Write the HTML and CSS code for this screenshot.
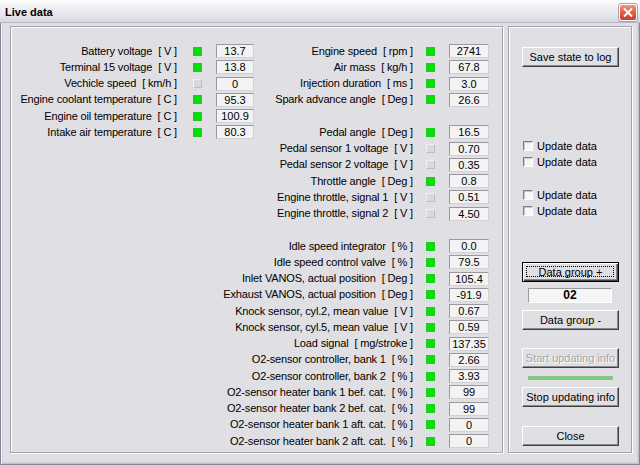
FILE: index.html
```html
<!DOCTYPE html>
<html>
<head>
<meta charset="utf-8">
<title>Live data</title>
<link rel="stylesheet" href="styles.css">
</head>
<body>
<div class="window">
  <div class="titlebar">
    <span class="title">Live data</span>
    <span class="close-x"><svg width="10" height="9" viewBox="0 0 10 9"><path d="M1 0.5 L9 8.5 M9 0.5 L1 8.5" stroke="#fff" stroke-width="2" fill="none"/></svg></span>
  </div>
  <div class="client">
    <div class="group data">
      <div class="top">
        <div class="col col1">
          <div class="row"><span class="lbl">Battery voltage <span class="u">[ V ]</span></span><i class="led on"></i><span class="val">13.7</span></div>
          <div class="row"><span class="lbl">Terminal 15 voltage <span class="u">[ V ]</span></span><i class="led on"></i><span class="val">13.8</span></div>
          <div class="row"><span class="lbl">Vechicle speed <span class="u">[ km/h ]</span></span><i class="led"></i><span class="val">0</span></div>
          <div class="row"><span class="lbl">Engine coolant temperature <span class="u">[ C ]</span></span><i class="led on"></i><span class="val">95.3</span></div>
          <div class="row"><span class="lbl">Engine oil temperature <span class="u">[ C ]</span></span><i class="led on"></i><span class="val">100.9</span></div>
          <div class="row"><span class="lbl">Intake air temperature <span class="u">[ C ]</span></span><i class="led on"></i><span class="val">80.3</span></div>
        </div>
        <div class="col col2">
          <div class="row"><span class="lbl">Engine speed <span class="u">[ rpm ]</span></span><i class="led on"></i><span class="val">2741</span></div>
          <div class="row"><span class="lbl">Air mass <span class="u">[ kg/h ]</span></span><i class="led on"></i><span class="val">67.8</span></div>
          <div class="row"><span class="lbl">Injection duration <span class="u">[ ms ]</span></span><i class="led on"></i><span class="val">3.0</span></div>
          <div class="row"><span class="lbl">Spark advance angle <span class="u">[ Deg ]</span></span><i class="led on"></i><span class="val">26.6</span></div>
          <div class="row gap-before"><span class="lbl">Pedal angle <span class="u">[ Deg ]</span></span><i class="led on"></i><span class="val">16.5</span></div>
          <div class="row"><span class="lbl">Pedal sensor 1 voltage <span class="u">[ V ]</span></span><i class="led"></i><span class="val">0.70</span></div>
          <div class="row"><span class="lbl">Pedal sensor 2 voltage <span class="u">[ V ]</span></span><i class="led"></i><span class="val">0.35</span></div>
          <div class="row"><span class="lbl">Throttle angle <span class="u">[ Deg ]</span></span><i class="led on"></i><span class="val">0.8</span></div>
          <div class="row"><span class="lbl">Engine throttle, signal 1 <span class="u">[ V ]</span></span><i class="led"></i><span class="val">0.51</span></div>
          <div class="row"><span class="lbl">Engine throttle, signal 2 <span class="u">[ V ]</span></span><i class="led"></i><span class="val">4.50</span></div>
        </div>
      </div>
      <div class="bottom">
        <div class="row"><span class="lbl">Idle speed integrator <span class="u">[ % ]</span></span><i class="led on"></i><span class="val">0.0</span></div>
        <div class="row"><span class="lbl">Idle speed control valve <span class="u">[ % ]</span></span><i class="led on"></i><span class="val">79.5</span></div>
        <div class="row"><span class="lbl">Inlet VANOS, actual position <span class="u">[ Deg ]</span></span><i class="led on"></i><span class="val">105.4</span></div>
        <div class="row"><span class="lbl">Exhaust VANOS, actual position <span class="u">[ Deg ]</span></span><i class="led on"></i><span class="val">-91.9</span></div>
        <div class="row"><span class="lbl">Knock sensor, cyl.2, mean value <span class="u">[ V ]</span></span><i class="led on"></i><span class="val">0.67</span></div>
        <div class="row"><span class="lbl">Knock sensor, cyl.5, mean value <span class="u">[ V ]</span></span><i class="led on"></i><span class="val">0.59</span></div>
        <div class="row"><span class="lbl">Load signal <span class="u">[ mg/stroke ]</span></span><i class="led on"></i><span class="val">137.35</span></div>
        <div class="row"><span class="lbl">O2-sensor controller, bank 1 <span class="u">[ % ]</span></span><i class="led on"></i><span class="val">2.66</span></div>
        <div class="row"><span class="lbl">O2-sensor controller, bank 2 <span class="u">[ % ]</span></span><i class="led on"></i><span class="val">3.93</span></div>
        <div class="row"><span class="lbl">O2-sensor heater bank 1 bef. cat. <span class="u">[ % ]</span></span><i class="led on"></i><span class="val">99</span></div>
        <div class="row"><span class="lbl">O2-sensor heater bank 2 bef. cat. <span class="u">[ % ]</span></span><i class="led on"></i><span class="val">99</span></div>
        <div class="row"><span class="lbl">O2-sensor heater bank 1 aft. cat. <span class="u">[ % ]</span></span><i class="led on"></i><span class="val">0</span></div>
        <div class="row"><span class="lbl">O2-sensor heater bank 2 aft. cat. <span class="u">[ % ]</span></span><i class="led on"></i><span class="val">0</span></div>
      </div>
    </div>
    <div class="group side">
      <div class="btn btn-save">Save state to log</div>
      <div class="chk chk-first"><i class="box"></i>Update data</div>
      <div class="chk"><i class="box"></i>Update data</div>
      <div class="chk chk-third"><i class="box"></i>Update data</div>
      <div class="chk"><i class="box"></i>Update data</div>
      <div class="btn btn-default btn-plus">Data group +</div>
      <div class="group-no">02</div>
      <div class="btn btn-minus">Data group -</div>
      <div class="btn btn-disabled btn-start">Start updating info</div>
      <div class="progress"></div>
      <div class="btn btn-stop">Stop updating info</div>
      <div class="btn btn-close">Close</div>
    </div>
  </div>
</div>
</body>
</html>
```

FILE: styles.css
```css
* { box-sizing: border-box; }
html, body { margin: 0; padding: 0; }
body {
  width: 640px;
  height: 465px;
  overflow: hidden;
  font-family: "Liberation Sans", Arial, sans-serif;
  font-size: 11px;
  color: #000;
  background: #e0dfe3;
}
.window {
  width: 640px;
  height: 465px;
  display: flex;
  flex-direction: column;
  background: #e0dfe3;
  border-left: 1px solid #85859a;
  border-right: 1px solid #85859a;
  border-bottom: 1px solid #85859a;
  box-shadow: inset 1px 0 #f4f4f8, inset -1px 0 #c4c4d0, inset 0 -1px #c4c4d0, inset 2px 0 #d0d0da, inset -2px 0 #d0d0da, inset 0 -2px #d0d0da;
}
.titlebar {
  height: 23px;
  flex: none;
  display: flex;
  align-items: center;
  justify-content: space-between;
  padding: 0 3px 0 5px;
  margin: 0 -1px;
  background: linear-gradient(to bottom, #fdfdfe 0%, #f0f0f4 35%, #e2e2ea 75%, #d6d6e0 100%);
  border-bottom: 1px solid #b8b8c6;
}
.title {
  font-weight: bold;
  font-size: 11px;
  padding-top: 1px;
}
.close-x {
  width: 18px;
  height: 17px;
  margin-top: 2px;
  display: flex;
  align-items: center;
  justify-content: center;
  border: 1px solid #fff;
  border-radius: 3px;
  background: linear-gradient(to bottom, #f09a80 0%, #e06048 45%, #c8402c 100%);
  box-shadow: 0 0 0 1px #b0a0a8;
}
.client {
  flex: 1;
  display: flex;
  padding: 3px 7px 11px 9px;
  gap: 5px;
}
.group {
  border: 1px solid #a2a2aa;
  box-shadow: inset 1px 1px 0 #fff, 1px 1px 0 #fff;
}
.data {
  width: 493px;
  padding: 16px 13px 0 0;
}
.top {
  display: flex;
  align-items: flex-start;
}
.col1 { width: 243px; }
.col2 { flex: 1; }
.row {
  height: 16.25px;
  display: flex;
  align-items: center;
}
.row.gap-before { margin-top: 16.25px; }
.bottom { margin-top: 16.25px; }
.lbl {
  flex: 1;
  text-align: right;
  white-space: nowrap;
  padding-bottom: 1px;
  letter-spacing: -0.15px;
}
.u { margin-left: 3px; }
.led {
  width: 9px;
  height: 9px;
  margin-left: 13px;
  background: #dadada;
  border: 1px solid;
  border-color: #f2f2f2 #bdbdbd #bdbdbd #f2f2f2;
}
.col1 .led { margin-left: 16px; }
.led.on {
  background: #0cdc0c;
  border-color: #18d018;
}
.val {
  width: 40px;
  height: 14px;
  margin-left: 14px;
  text-align: center;
  line-height: 12px;
  background: #f3f3f4;
  border: 1px solid;
  border-color: #9a9a9e #d2d2d6 #d2d2d6 #9a9a9e;
}
.col1 .val { width: 38px; }

.side {
  width: 124px;
  display: flex;
  flex-direction: column;
  align-items: flex-start;
  padding-left: 13px;
}
.btn {
  width: 97px;
  height: 20px;
  display: flex;
  align-items: center;
  justify-content: center;
  background: #e0dfe3;
  border: 1px solid;
  border-color: #ffffff #404040 #404040 #ffffff;
  box-shadow: inset -1px -1px 0 #8a8a8e;
  padding-bottom: 1px;
}
.btn-save { margin-top: 20px; }
.btn-default {
  position: relative;
  border: 1px solid #000;
  box-shadow: inset 1px 1px 0 #fff, inset -1px -1px 0 #404040, inset -2px -2px 0 #8a8a8e;
}
.btn-default::after {
  content: "";
  position: absolute;
  left: 3px; top: 3px; right: 4px; bottom: 4px;
  border: 1px dotted #000;
}
.btn-plus { margin-top: 43px; }
.group-no {
  width: 84px;
  height: 15px;
  margin: 6px 0 0 6px;
  background: #f5f5f6;
  border: 1px solid;
  border-color: #9a9a9e #ffffff #ffffff #9a9a9e;
  font-weight: bold;
  font-size: 12px;
  text-align: center;
  line-height: 13px;
}
.btn-minus { margin-top: 7px; }
.btn-start { margin-top: 18px; }
.btn-disabled {
  color: #a4a4a8;
  text-shadow: 1px 1px 0 #fff;
}
.progress {
  width: 85px;
  height: 4px;
  margin: 8px 0 0 6px;
  background: #6cd86c;
  border: 1px solid #9ab89a;
}
.btn-stop { margin-top: 7px; }
.btn-close { margin-top: 19px; }
.chk {
  height: 16px;
  display: flex;
  align-items: center;
  margin-left: 1px;
  font-size: 11px;
}
.chk-first { margin-top: 71px; }
.chk-third { margin-top: 17px; }
.chk .box {
  width: 10px;
  height: 10px;
  margin-right: 4px;
  background: #f6f6f6;
  border: 1px solid;
  border-color: #808084 #ffffff #ffffff #808084;
  box-shadow: inset 1px 1px 0 #c8c8cc;
}
```
